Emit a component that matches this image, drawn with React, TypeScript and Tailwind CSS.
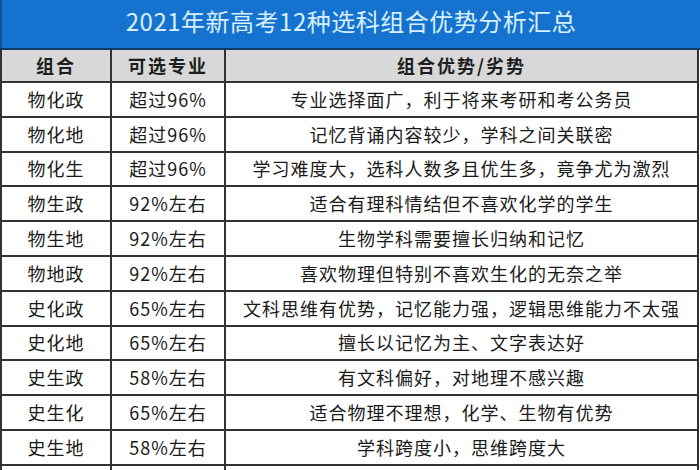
import React from 'react'

const rows: [string, string, string][] = [
  ['物化政', '超过96%', '专业选择面广，利于将来考研和考公务员'],
  ['物化地', '超过96%', '记忆背诵内容较少，学科之间关联密'],
  ['物化生', '超过96%', '学习难度大，选科人数多且优生多，竟争尤为激烈'],
  ['物生政', '92%左右', '适合有理科情结但不喜欢化学的学生'],
  ['物生地', '92%左右', '生物学科需要擅长归纳和记忆'],
  ['物地政', '92%左右', '喜欢物理但特别不喜欢生化的无奈之举'],
  ['史化政', '65%左右', '文科思维有优势，记忆能力强，逻辑思维能力不太强'],
  ['史化地', '65%左右', '擅长以记忆为主、文字表达好'],
  ['史生政', '58%左右', '有文科偏好，对地理不感兴趣'],
  ['史生化', '65%左右', '适合物理不理想，化学、生物有优势'],
  ['史生地', '58%左右', '学科跨度小，思维跨度大'],
]

const font = { fontFamily: '"Noto Sans CJK SC", "Noto Sans", sans-serif' }

export default function App() {
  return (
    <div className="w-[700px] h-[470px] overflow-hidden bg-white" style={font}>
      {/* Title */}
      <div className="h-[48px] bg-[#1672cf] border-l-2 border-[#0e4f96] flex items-center justify-center pb-[6px]">
        <span className="text-[24px] text-[#d6f0ff] leading-none tracking-[0.5px]">
          2021年新高考12种选科组合优势分析汇总
        </span>
      </div>
      <div className="h-[2px] bg-[#103a68]" />

      {/* Table */}
      <div className="w-[699px] border-l-2 border-r-2 border-[#333]">
        <div className="grid grid-cols-[110px_114px_1fr] h-[33px] bg-[#d8d8d8] border-b-2 border-[#333] text-[18px] font-bold text-[#1e1e1e]">
          <div className="flex items-center justify-center border-r-2 border-[#333] tracking-[2px]">组合</div>
          <div className="flex items-center justify-center border-r-2 border-[#333] tracking-[2px]">可选专业</div>
          <div className="flex items-center justify-center tracking-[2px]">组合优势/劣势</div>
        </div>
        {rows.map(([a, b, c]) => (
          <div
            key={a}
            className="grid grid-cols-[110px_114px_1fr] h-[34.8px] border-b-2 border-[#333] text-[18px] text-[#1a1a1a]"
          >
            <div className="flex items-center justify-center border-r-2 border-[#333] tracking-[1px]">{a}</div>
            <div className="flex items-center justify-center border-r-2 border-[#333] tracking-[1px]">{b}</div>
            <div className="flex items-center justify-center tracking-[1px] whitespace-nowrap">{c}</div>
          </div>
        ))}
        {/* next row, cut off by the image edge */}
        <div className="grid grid-cols-[110px_114px_1fr] h-[34.8px]">
          <div className="border-r-2 border-[#333]" />
          <div className="border-r-2 border-[#333]" />
          <div />
        </div>
      </div>
    </div>
  )
}
